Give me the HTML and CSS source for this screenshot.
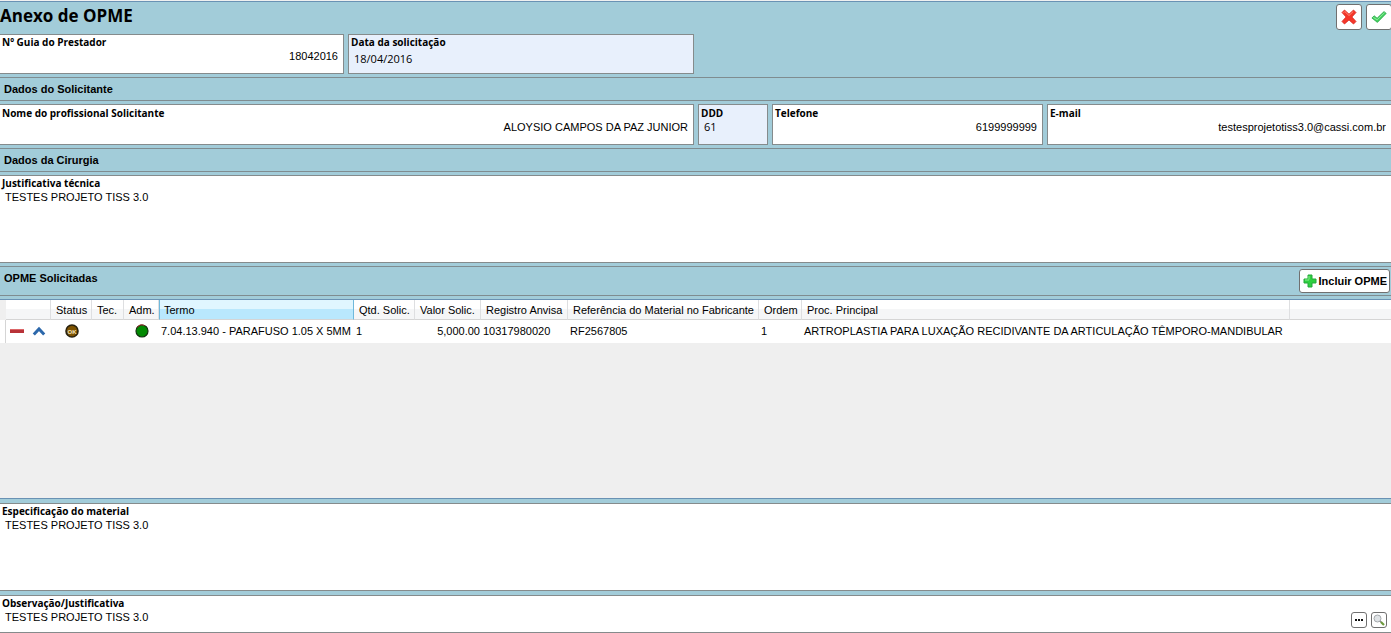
FILE: index.html
```html
<!DOCTYPE html>
<html lang="pt-BR">
<head>
<meta charset="utf-8">
<title>Anexo de OPME</title>
<link rel="stylesheet" href="styles.css">
</head>
<body>
<form class="page">
  <header class="top">
    <h1 class="title">Anexo de OPME</h1>
    <div class="actions">
      <button class="btn btn-tool" type="button" aria-label="Cancelar">
        <svg width="16" height="16" viewBox="0 0 16 16"><path d="M1 3.500 3.500 1 8 5.200 12.500 1 15 3.500 10.900 8 15 12.500 12.500 15 8 10.900 3.500 15 1 12.500 5.100 8z" fill="#f5372a" stroke="#d8231a" stroke-width=".8" stroke-linejoin="round"/><path d="M2.500 3.800 3.800 2.500 8 6.500l4.200-4" fill="none" stroke="#ff8a76"/></svg>
      </button>
      <button class="btn btn-tool" type="button" aria-label="Confirmar">
        <svg width="16" height="16" viewBox="0 0 16 16"><path d="M.9 9 3.200 6.800l2.900 2.400L13 2.600l2.200 1.800L6.400 13.400z" fill="#43d160" stroke="#2ba84a" stroke-width=".8" stroke-linejoin="round"/><path d="M2.300 8.400 6.200 10.800l7.400-7.200" fill="none" stroke="#8beb97"/></svg>
      </button>
    </div>
  </header>

  <div class="fields fields-guide">
    <div class="field"><label for="guia">Nº Guia do Prestador</label><input class="right" id="guia" value="18042016"></div>
    <div class="field tinted"><label for="data">Data da solicitação</label><input class="alt low" id="data" value="18/04/2016"></div>
  </div>

  <h2 class="section">Dados do Solicitante</h2>
  <div class="fields fields-person">
    <div class="field"><label for="nome">Nome do profissional Solicitante</label><input class="right" id="nome" value="ALOYSIO CAMPOS DA PAZ JUNIOR"></div>
    <div class="field tinted"><label for="ddd">DDD</label><input class="alt" id="ddd" value="61"></div>
    <div class="field"><label for="fone">Telefone</label><input class="right" id="fone" value="6199999999"></div>
    <div class="field"><label for="email">E-mail</label><input class="right" id="email" value="testesprojetotiss3.0@cassi.com.br"></div>
  </div>

  <h2 class="section">Dados da Cirurgia</h2>
  <div class="field wide snug"><label for="just">Justificativa técnica</label><textarea id="just" rows="5">TESTES PROJETO TISS 3.0</textarea></div>

  <div class="section section-tall">
    <h2 class="section-title">OPME Solicitadas</h2>
    <button class="btn btn-add" type="button">
      <svg width="14" height="14" viewBox="0 0 14 14"><path d="M5 1h4v4h4v4H9v4H5V9H1V5h4z" fill="#2fd040" stroke="#25a83a"/><path d="M6 5.500V2M2 6h4" stroke="#8df08f" fill="none"/></svg>Incluir OPME
    </button>
  </div>

  <div class="grid">
    <table>
      <colgroup><col class="c-gutter"><col class="c-tools"><col class="c-status"><col class="c-tec"><col class="c-adm"><col class="c-termo"><col class="c-qtd"><col class="c-valor"><col class="c-reg"><col class="c-ref"><col class="c-ordem"><col class="c-proc"><col></colgroup>
      <thead>
        <tr><td class="gutter"></td><th></th><th>Status</th><th>Tec.</th><th>Adm.</th><th class="sorted">Termo</th><th>Qtd. Solic.</th><th>Valor Solic.</th><th>Registro Anvisa</th><th>Referência do Material no Fabricante</th><th>Ordem</th><th>Proc. Principal</th><th></th></tr>
      </thead>
      <tbody>
        <tr>
          <td class="handle"></td>
          <td><div class="tools">
            <button class="icon-btn" type="button" aria-label="Remover"><svg width="14" height="6" viewBox="0 0 14 6"><path d="M0 1h14v4H0z" fill="#b83238"/><path d="M0 1.500h14" stroke="#dc6668"/></svg></button>
            <button class="icon-btn" type="button" aria-label="Recolher"><svg width="14" height="12" viewBox="0 0 14 12"><path d="m1.800 9.500 5.200-5.500 5.200 5.500" fill="none" stroke="#2c68ab" stroke-width="3"/></svg></button>
          </div></td>
          <td class="center"><svg width="14" height="14" viewBox="0 0 14 14"><circle cx="7" cy="7" r="6" fill="#7d5200" stroke="#29220f" stroke-width="1.600"/><text class="ok" x="7" y="9.500" text-anchor="middle">OK</text></svg></td>
          <td></td>
          <td class="center"><svg width="14" height="14" viewBox="0 0 14 14"><circle cx="7" cy="7" r="6" fill="#028a02" stroke="#12330f" stroke-width="1.200"/><path d="M2 3.600A6 6 0 0 1 9.500 1.500" fill="none" stroke="#a33030"/></svg></td>
          <td>7.04.13.940 - PARAFUSO 1.05 X 5MM</td><td>1</td><td class="num">5,000.00</td><td>10317980020</td><td>RF2567805</td><td>1</td><td>ARTROPLASTIA PARA LUXAÇÃO RECIDIVANTE DA ARTICULAÇÃO TÊMPORO-MANDIBULAR</td><td></td>
        </tr>
      </tbody>
    </table>
  </div>

  <div class="field wide"><label for="espec">Especificação do material</label><textarea id="espec" rows="5">TESTES PROJETO TISS 3.0</textarea></div>
  <div class="field wide">
    <label for="obs">Observação/Justificativa</label>
    <div class="note">
      <textarea id="obs" rows="1">TESTES PROJETO TISS 3.0</textarea>
      <button class="btn btn-mini" type="button" aria-label="Mais opções"><svg width="8" height="4" viewBox="0 0 8 4"><path d="M0 1h2v2H0zM3 1h2v2H3zM6 1h2v2H6z" fill="#111"/></svg></button>
      <button class="btn btn-mini" type="button" aria-label="Ampliar"><svg width="12" height="12" viewBox="0 0 12 12"><circle cx="4.500" cy="4.500" r="3.500" fill="#dfe3e6" stroke="#a5a9ad"/><path d="m7 7 1.500 1.500" stroke="#888" stroke-width="1.500"/><path d="m8 8 3 3" stroke="#6d9a3d" stroke-width="2.200"/></svg></button>
    </div>
  </div>
</form>
</body>
</html>
```

FILE: styles.css
```css
* { box-sizing: border-box; }

body {
  margin: 0;
  background: #a2ccd9;
  color: #000;
  font: 11px/14px "Liberation Sans", Arial, sans-serif;
}

.page {
  border-top: 1px solid #f0f0f0;
  overflow-x: hidden;
}

.top {
  display: flex;
  justify-content: space-between;
  height: 33px;
  border-top: 1px solid #6a92b4;
}

.title {
  margin: 0;
  font: bold 17px/28px "Open Sans", "Noto Sans", sans-serif;
}

.actions {
  display: flex;
  gap: 4px;
  margin-right: -1px;
  padding-top: 2px;
}

.btn {
  display: flex;
  align-items: center;
  justify-content: center;
  padding: 0;
  border: 1px solid #707070;
  border-radius: 3px;
  background: #fff;
  color: #000;
}

.btn-tool { width: 26px; height: 26px; }

.btn-add {
  gap: 2px;
  height: 24px;
  padding: 0 2px 0 3px;
  font: bold 11px/14px "Liberation Sans", Arial, sans-serif;
}

.btn-mini {
  flex: none;
  width: 16px;
  height: 16px;
  margin-top: 2px;
}

.fields {
  display: grid;
  gap: 4px;
  margin-bottom: 3px;
}

.fields-guide { grid-template-columns: 344fr 346fr 693fr; }
.fields-person { grid-template-columns: 694fr 70fr 271fr 344fr; }

.field {
  min-width: 0;
  min-height: 40px;
  padding: 1px 2px;
  border: 1px solid #858b8c;
  background: #fff;
}

.fields-person .field {
  min-height: 41px;
  padding-top: 2px;
}

.field:first-child,
.wide { border-left: 0; }

.fields-person .field:last-child,
.wide { border-right: 0; }

.tinted { background: #e8f0fc; }

.field label {
  display: block;
  font: bold 10px/13px "Open Sans", "Noto Sans", sans-serif;
}

.field input,
.field textarea {
  display: block;
  width: 100%;
  margin: 0;
  padding: 0 3px;
  border: 0;
  background: transparent;
  color: #000;
  font: inherit;
  outline: 0;
  resize: none;
  overflow: hidden;
}

.field input { height: 14px; }
.field .right { text-align: right; }
.field .alt { font-family: "Open Sans", "Noto Sans", sans-serif; }
.field .low { height: 19px; }

.wide {
  min-height: 38px;
  margin-bottom: 4px;
  padding-bottom: 2px;
}

.snug { margin-bottom: 3px; }
.wide:last-child { margin-bottom: 0; }

.section {
  height: 24px;
  margin: 0 0 3px;
  padding-left: 4px;
  border: solid #7f8c90;
  border-width: 1px 0;
  font-size: 11px;
  line-height: 22px;
}

.section-tall {
  display: flex;
  justify-content: space-between;
  height: 30px;
  padding-right: 1px;
  padding-top: 2px;
}

.section-title {
  margin: 0;
  font-size: 11px;
  line-height: 18px;
}

.grid {
  height: 200px;
  margin-bottom: 4px;
  border: solid #6a92b4;
  border-width: 1px 0;
  background: #efefef;
  overflow: hidden;
}

table {
  width: 100%;
  border-collapse: separate;
  border-spacing: 0;
  table-layout: fixed;
}

.c-gutter { width: 6px; }
.c-tools { width: 45px; }
.c-status { width: 41px; }
.c-tec { width: 32px; }
.c-adm { width: 35px; }
.c-termo { width: 195px; }
.c-qtd { width: 61px; }
.c-valor { width: 66px; }
.c-reg { width: 87px; }
.c-ref { width: 191px; }
.c-ordem { width: 43px; }
.c-proc { width: 488px; }

th {
  height: 20px;
  padding: 0 0 0 5px;
  border-right: 1px solid #dedfe1;
  border-bottom: 1px solid #d5d5d5;
  background: linear-gradient(#fff 45%, #f5f6f7 46%);
  font-weight: normal;
  text-align: left;
  white-space: nowrap;
}

th:last-child { border-right: 0; }

.sorted {
  padding-left: 4px;
  border-right-color: #6fb9dc;
  border-left: 1px solid #6fb9dc;
  background: linear-gradient(#e0f6ff 45%, #b9e8fd 46%);
}

td {
  height: 23px;
  padding: 0 1px 2px 2px;
  background: #fff;
  white-space: nowrap;
}

td svg { display: block; }
.center svg { margin: 0 auto; }

.gutter {
  height: 20px;
  background: #efefef;
}

.handle { border-right: 1px solid #d5d5d5; }
.num { text-align: right; }

.tools {
  display: flex;
  align-items: center;
  gap: 8px;
  padding-left: 2px;
}

.icon-btn {
  padding: 0;
  border: 0;
  background: none;
}

.ok {
  fill: #f2e4bd;
  font: bold 6px "Liberation Sans", Arial, sans-serif;
}

.note {
  display: flex;
  align-items: flex-start;
  gap: 4px;
  padding: 0 2px 1px 0;
}
```
